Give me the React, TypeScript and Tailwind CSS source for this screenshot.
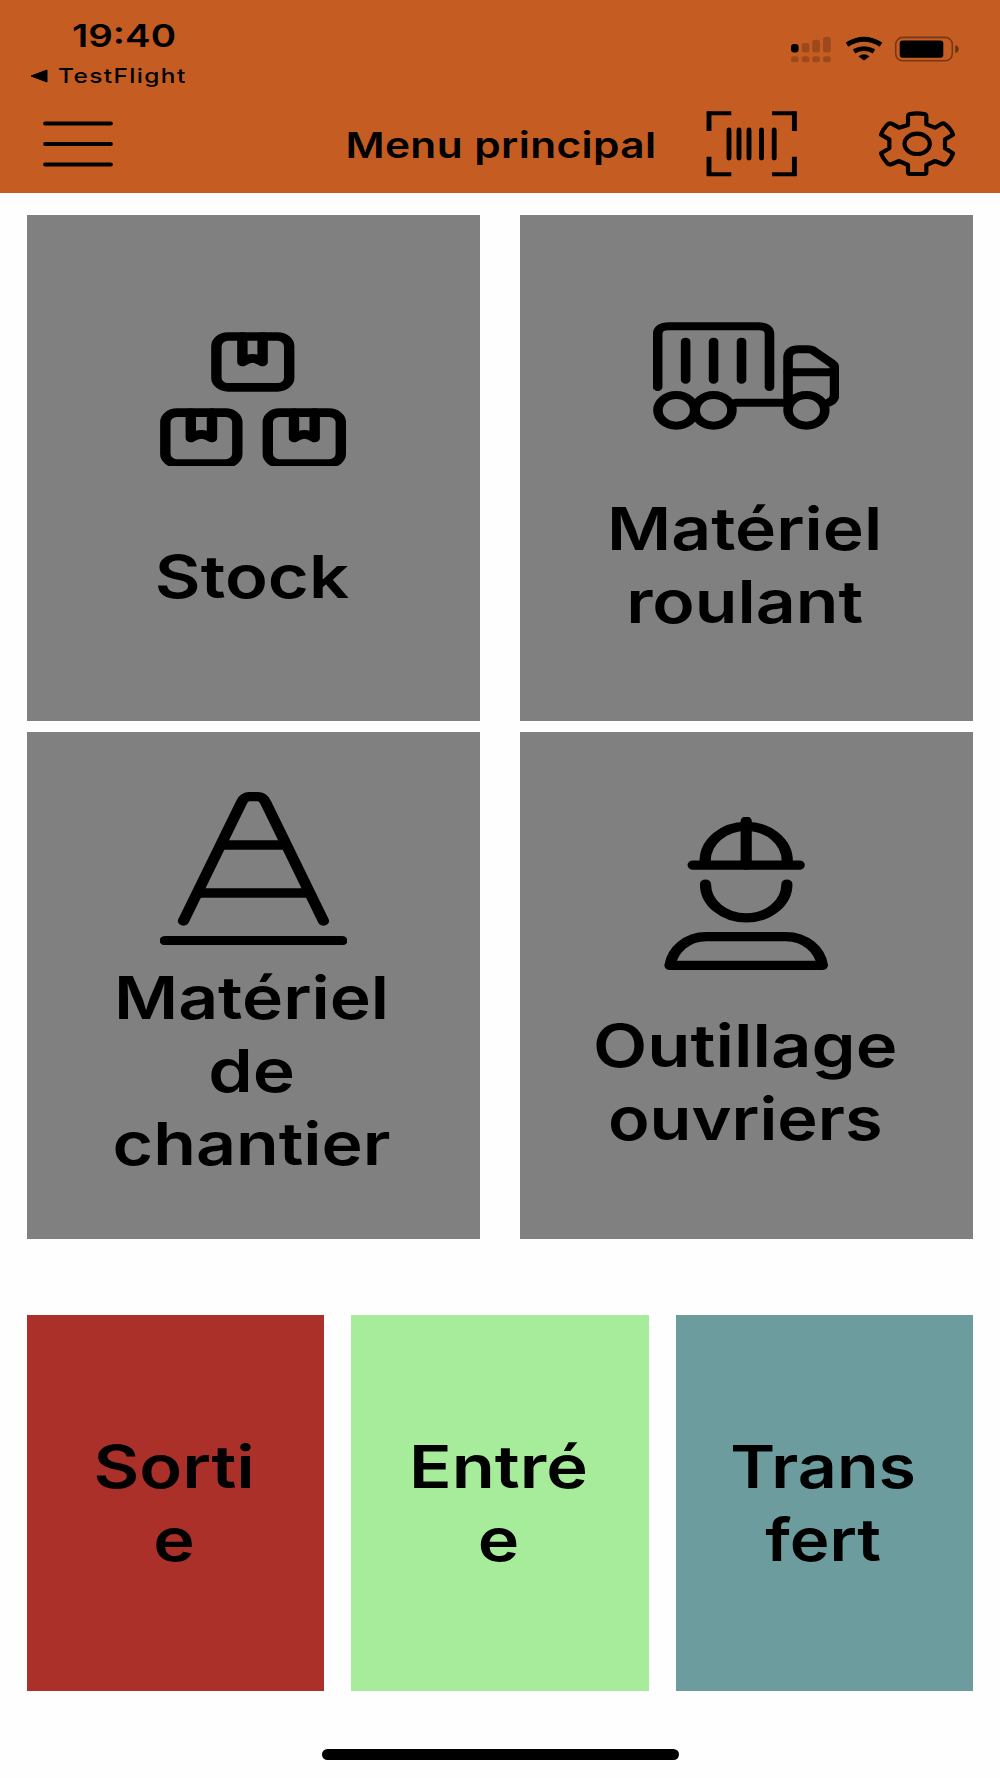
import type { ReactNode } from "react";

type Line = { text: string; scale: string };

function Label({ lines }: { lines: Line[] }) {
  return (
    <div className="pr-[3px] text-center text-[59.5px] font-semibold leading-[73px]">
      {lines.map((line) => (
        <div key={line.text} className={`whitespace-nowrap ${line.scale}`}>
          {line.text}
        </div>
      ))}
    </div>
  );
}

const stroke = {
  fill: "none",
  stroke: "#000",
  strokeLinecap: "round",
  strokeLinejoin: "round",
} as const;

function BoxesIcon() {
  return (
    <svg className="mr-[2px] h-[134px] w-[186px]" viewBox="50 66 465 402" preserveAspectRatio="none" {...stroke} strokeWidth="26">
      <rect x="191" y="79.5" width="182" height="152.5" rx="29" />
      <path d="M256 80V156Q270 145 281 145T306.500 156V80" />
      <rect x="63.300" y="308" width="180" height="152.500" rx="29" />
      <path d="M127 308V384Q141 373 153.500 373T180 384V308" />
      <rect x="319.500" y="308" width="182.500" height="152.500" rx="29" />
      <path d="M385 308V384Q399 373 411 373T436.700 384V308" />
    </svg>
  );
}

function TruckIcon() {
  return (
    <svg className="mr-[1px] h-[108px] w-[186px]" viewBox="158.300 65 465.800 324" preserveAspectRatio="none" {...stroke} strokeWidth="24">
      <path d="M170 260V102Q170 78 198 78H422Q450 78 450 102V260" />
      <path d="M240 124V238M310 124V238M380 124V238" />
      <circle cx="216.700" cy="330" r="46" />
      <circle cx="310" cy="330" r="46" />
      <circle cx="542.500" cy="330" r="46" />
      <path d="M366 307H490" />
      <path d="M496.500 308V172Q496.500 147 524 147H546Q556 147 564 154L607 190Q613 195 613 204V283Q613 299 599 306" />
      <path d="M497 215.500H612" />
    </svg>
  );
}

function LadderIcon() {
  return (
    <svg className="h-[153px] w-[187px]" viewBox="175 66 466.700 459" preserveAspectRatio="none" {...stroke} strokeWidth="28">
      <path d="M233.500 453L378 98Q385 80 398 80H419Q432 80 439 98L583 453" />
      <path d="M333 225H484M275 369H543" />
      <path d="M188 512H629" />
    </svg>
  );
}

function WorkerIcon() {
  return (
    <svg className="mr-[2px] h-[153px] w-[164px]" viewBox="235 80 411 458" preserveAspectRatio="none" {...stroke} strokeWidth="28">
      <path d="M308 224H574" />
      <path d="M338 220V212A103 104 0 0 1 544 212V220" />
      <path d="M441 92V224" />
      <path d="M339 281A102 101 0 0 0 543 281" />
      <path d="M250 524H632C626 478 590 438 540 438H341C292 438 256 478 250 524Z" />
    </svg>
  );
}

function StatusIcons() {
  return (
    <svg className="mt-[32px] mr-[38px] h-[34px] w-[176px]" viewBox="786 32 176 34">
      <rect x="791" y="44" width="7.600" height="8.600" rx="3" />
      <g opacity="0.2">
        <rect x="801.700" y="43" width="7.800" height="9.500" rx="2.500" />
        <rect x="812.200" y="39.700" width="7.800" height="12.800" rx="2.500" />
        <rect x="823" y="36.700" width="7.800" height="15.800" rx="2.500" />
        <rect x="791" y="56.300" width="7.600" height="6" rx="2.500" />
        <rect x="801.700" y="56.300" width="7.800" height="6" rx="2.500" />
        <rect x="812.200" y="56.300" width="7.800" height="6" rx="2.500" />
        <rect x="823" y="56.300" width="7.800" height="6" rx="2.500" />
      </g>
      <path d="M847 44.600Q864 34 881 44.600M854 51.300Q864 45.800 874 51.300" fill="none" stroke="#000" strokeWidth="4.800" />
      <path d="M858.500 56.600Q864 52 869.500 56.600L864 60.600Z" />
      <rect x="895.700" y="37.400" width="56.600" height="23.400" rx="7" fill="none" stroke="#000" strokeOpacity="0.4" strokeWidth="1.600" />
      <rect x="899.700" y="40.500" width="43.600" height="17.300" rx="3" />
      <path d="M955.200 45Q958.800 46 958.800 49T955.200 53Z" opacity="0.45" />
    </svg>
  );
}

function MenuIcon() {
  return (
    <svg className="ml-[43px] h-[46px] w-[70px]" viewBox="0 0.500 70 46" {...stroke} strokeWidth="4.200">
      <path d="M2.200 3H67.800M2.200 23.500H67.800M2.200 44H67.800" />
    </svg>
  );
}

function BarcodeIcon() {
  return (
    <svg className="ml-[51px] h-[66px] w-[91px]" viewBox="706 111 91 66" fill="none" stroke="#000">
      <path d="M709 111.500V131M794.400 111.500V131M709 156.700V176M794.400 156.700V176" strokeWidth="4.900" />
      <path d="M707 113.200H731.300M772 113.200H796.500M707 174.300H731.300M772 174.300H796.500" strokeWidth="4" />
      <path d="M729 130V158M739 130V158M749 130V158M761.500 130V158M774.200 130V158" strokeWidth="4.900" strokeLinecap="round" />
    </svg>
  );
}

function GearIcon() {
  return (
    <svg className="ml-[82px] h-[66px] w-[76px]" viewBox="27 33 228 198" {...stroke} strokeWidth="12.500">
      <path d="M114 75V49Q114 43 120 42Q141 38 163 42Q169 43 169 49V73L195 83L215 71Q221 68 227 74Q244 88 249 104L225 118V145L249 160Q245 175 231 190Q225 195 218 192L195 183L169 195V217Q169 222 163 222H120Q114 222 114 217V195L87 183L66 192Q58 195 52 190Q38 175 33 160L58 145V118L33 104Q38 89 52 74Q58 68 65 71L87 83Z" />
      <ellipse cx="141.500" cy="131.500" rx="38" ry="30.500" />
    </svg>
  );
}

function Tile({ className, children }: { className: string; children: ReactNode }) {
  return <button className={`flex flex-col items-center text-black ${className}`}>{children}</button>;
}

export default function App() {
  return (
    <div className="flex h-[1778px] w-[1000px] flex-col overflow-hidden bg-[#fefefe] font-['Inter',sans-serif] text-black">
      <header className="flex h-[193px] flex-col bg-[#c55d23]">
        <div className="flex h-[94px] shrink-0 justify-between">
          <div className="w-[248px] pt-[21px]">
            <div className="scale-x-[1.24] text-center text-[31px] font-semibold leading-[30px]">19:40</div>
            <div className="mt-[13px] flex items-center pl-[30px]">
              <svg className="h-[14px] w-[18px]" viewBox="0 0 18 14">
                <path d="M1 7L17 1V13Z" stroke="#000" strokeLinejoin="round" />
              </svg>
              <span className="ml-[10px] origin-left scale-x-[1.22] text-[20px] font-medium leading-[24px] tracking-[1.15px]">
                TestFlight
              </span>
            </div>
          </div>
          <StatusIcons />
        </div>
        <div className="grid h-[99px] grid-cols-[347px_308px_345px] items-center">
          <MenuIcon />
          <h1 className="mt-[4px] scale-x-[1.2] whitespace-nowrap text-center text-[35.3px] font-semibold leading-[44px] tracking-[0.35px]">
            Menu principal
          </h1>
          <div className="flex items-center">
            <BarcodeIcon />
            <GearIcon />
          </div>
        </div>
      </header>

      <main className="flex flex-col px-[27px] pt-[22px]">
        <div className="grid grid-cols-2 gap-x-[40px] gap-y-[10.500px]">
          <Tile className="h-[506px] bg-[#808080] pt-[117px]">
            <BoxesIcon />
            <div className="mt-[74px]">
              <Label lines={[{ text: "Stock", scale: "scale-x-[1.185]" }]} />
            </div>
          </Tile>
          <Tile className="h-[506px] bg-[#808080] pt-[107px]">
            <TruckIcon />
            <div className="mt-[62px]">
              <Label
                lines={[
                  { text: "Matériel", scale: "scale-x-[1.17]" },
                  { text: "roulant", scale: "scale-x-[1.172]" },
                ]}
              />
            </div>
          </Tile>
          <Tile className="h-[507px] bg-[#808080] pt-[60px]">
            <LadderIcon />
            <div className="mt-[16px]">
              <Label
                lines={[
                  { text: "Matériel", scale: "scale-x-[1.17]" },
                  { text: "de", scale: "scale-x-[1.2]" },
                  { text: "chantier", scale: "scale-x-[1.173]" },
                ]}
              />
            </div>
          </Tile>
          <Tile className="h-[507px] bg-[#808080] pt-[85px]">
            <WorkerIcon />
            <div className="mt-[39px]">
              <Label
                lines={[
                  { text: "Outillage", scale: "scale-x-[1.187]" },
                  { text: "ouvriers", scale: "scale-x-[1.15]" },
                ]}
              />
            </div>
          </Tile>
        </div>

        <div className="mt-[76.500px] grid grid-cols-3 gap-[27px]">
          <Tile className="h-[376px] bg-[#ab302a] pt-[115px]">
            <Label
              lines={[
                { text: "Sorti", scale: "scale-x-[1.185]" },
                { text: "e", scale: "scale-x-[1.18]" },
              ]}
            />
          </Tile>
          <Tile className="h-[376px] bg-[#a6ec9a] pt-[115px]">
            <Label
              lines={[
                { text: "Entré", scale: "scale-x-[1.185]" },
                { text: "e", scale: "scale-x-[1.18]" },
              ]}
            />
          </Tile>
          <Tile className="h-[376px] bg-[#6d9c9e] pt-[115px]">
            <Label
              lines={[
                { text: "Trans", scale: "scale-x-[1.145]" },
                { text: "fert", scale: "scale-x-[1.13]" },
              ]}
            />
          </Tile>
        </div>
      </main>

      <div className="mx-auto mt-[58px] h-[11px] w-[357px] rounded-full bg-black" />
    </div>
  );
}
